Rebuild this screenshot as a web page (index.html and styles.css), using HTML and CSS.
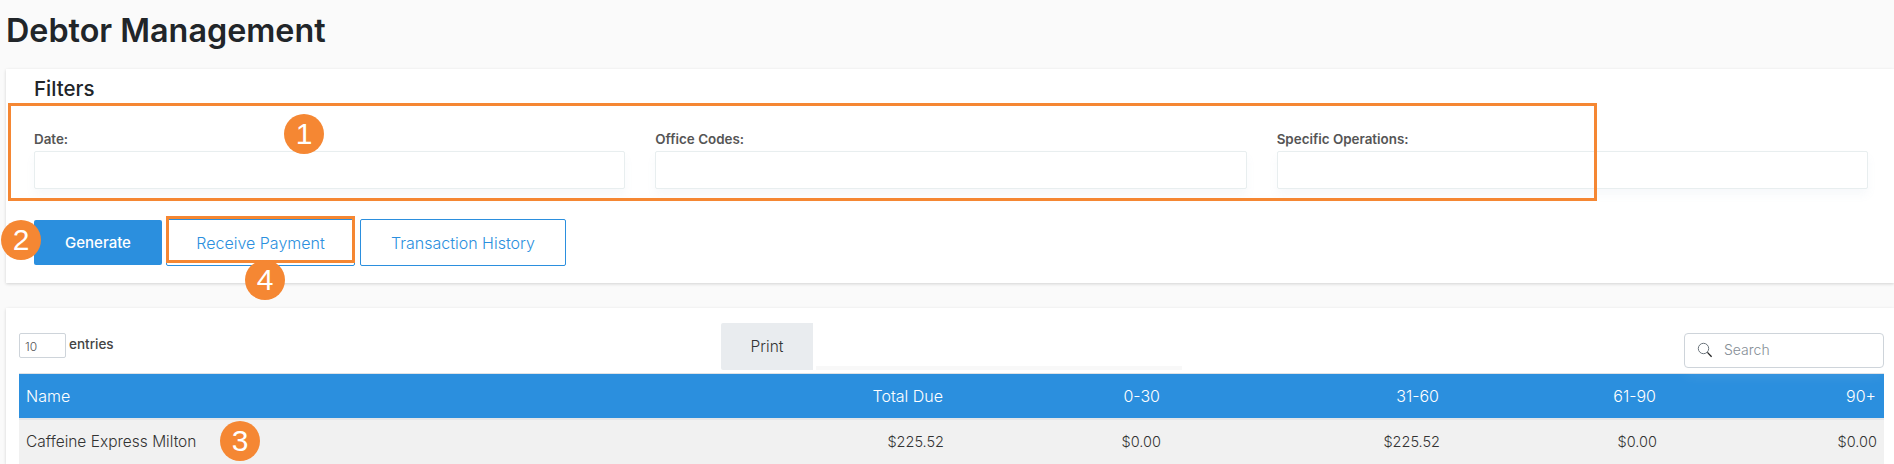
FILE: index.html
```html
<!DOCTYPE html>
<html lang="en">
<head>
    <meta charset="UTF-8">
    <meta name="viewport" content="width=device-width, initial-scale=1.0">
    <title>Debtor Management</title>
    <link rel="stylesheet" href="styles.css">
</head>
<body>
    <div class="page">
        <h1 class="page-title">Debtor Management</h1>

        <section class="card filters-card">
            <h3 class="card-title">Filters</h3>
            <div class="filter-row">
                <div class="filter-field">
                    <label>Date:</label>
                    <input type="text" class="filter-input">
                </div>
                <div class="filter-field">
                    <label>Office Codes:</label>
                    <input type="text" class="filter-input">
                </div>
                <div class="filter-field">
                    <label>Specific Operations:</label>
                    <input type="text" class="filter-input">
                </div>
            </div>
            <div class="button-row">
                <button type="button" class="btn btn-solid">Generate</button>
                <button type="button" class="btn btn-outline btn-receive">Receive Payment</button>
                <button type="button" class="btn btn-outline btn-history">Transaction History</button>
            </div>
        </section>

        <section class="card table-card">
            <div class="table-toolbar">
                <div class="entries">
                    <span class="entries-select">10</span>
                    <span class="entries-label">entries</span>
                </div>
                <div class="print-bar">
                    <button type="button" class="btn-print">Print</button>
                    <div class="print-strip"></div>
                </div>
                <div class="search-box">
                    <svg class="search-icon" width="16" height="16" viewBox="0 0 16 16" fill="none">
                        <circle cx="6.5" cy="6.5" r="5.2" stroke="#6c757d" stroke-width="1"/>
                        <path d="M10.4 10.4L14.6 14.8" stroke="#222" stroke-width="1.3"/>
                    </svg>
                    <input type="text" class="search-input" placeholder="Search">
                </div>
            </div>

            <table class="debtor-table">
                <colgroup>
                    <col class="col-name">
                    <col class="col-total">
                    <col class="col-short">
                    <col class="col-wide">
                    <col class="col-short">
                    <col class="col-last">
                </colgroup>
                <thead>
                    <tr>
                        <th class="text-left">Name</th>
                        <th>Total Due</th>
                        <th>0-30</th>
                        <th>31-60</th>
                        <th>61-90</th>
                        <th>90+</th>
                    </tr>
                </thead>
                <tbody>
                    <tr>
                        <td class="text-left">Caffeine Express Milton</td>
                        <td>$225.52</td>
                        <td>$0.00</td>
                        <td>$225.52</td>
                        <td>$0.00</td>
                        <td>$0.00</td>
                    </tr>
                </tbody>
            </table>
        </section>

        <!-- annotations drawn over the screen -->
        <div class="callout-box callout-filters"></div>
        <div class="callout-box callout-receive"></div>
        <div class="badge badge-1">1</div>
        <div class="badge badge-2">2</div>
        <div class="badge badge-3">3</div>
        <div class="badge badge-4">4</div>
    </div>
</body>
</html>
```

FILE: styles.css
```css
html, body {
    margin: 0;
    height: 100%;
    overflow: hidden;
}

body {
    font-family: 'Inter', 'Noto Sans', sans-serif;
    background: #fafafa;
    color: #333;
}

.page {
    position: relative;
    height: 464px;
    overflow: hidden;
}

.page-title {
    margin: 0;
    height: 69px;
    padding: 13px 0 0 6px;
    box-sizing: border-box;
    font-size: 32.3px;
    line-height: 36px;
    font-weight: 600;
    color: #212529;
}

.card {
    margin-left: 6px;
    background: #fff;
    box-shadow: 0 1px 3px rgba(0, 0, 0, 0.16);
}

/* Filters */
.filters-card {
    height: 214px;
    box-sizing: border-box;
    padding: 8px 26px 0 28px;
}

.card-title {
    margin: 0;
    font-size: 20.5px;
    line-height: 24px;
    font-weight: 500;
    color: #212529;
}

.filter-row {
    display: grid;
    grid-template-columns: repeat(3, 1fr);
    gap: 30px;
    margin-top: 30px;
}

.filter-field label {
    display: block;
    height: 20px;
    font-size: 13.4px;
    line-height: 16px;
    font-weight: 600;
    color: #555;
}

.filter-input {
    display: block;
    width: 100%;
    height: 38px;
    box-sizing: border-box;
    border: 1px solid #e8eeef;
    border-radius: 2px;
    background: #fff;
    box-shadow: 0 6px 10px rgba(120, 160, 180, 0.06);
}

.button-row {
    display: flex;
    align-items: center;
    margin-top: 30px;
    height: 47px;
}

.btn {
    height: 47px;
    box-sizing: border-box;
    border-radius: 2px;
    font-family: inherit;
    font-size: 16px;
    padding: 0;
}

.btn-solid {
    width: 128px;
    height: 45px;
    border: none;
    background: #2b8fde;
    color: #fff;
    font-size: 15px;
    font-weight: 500;
}

.btn-outline {
    background: #fff;
    border: 1px solid #2b8fde;
    color: #2b8fde;
    font-weight: 300;
}

.btn-receive {
    width: 189px;
    margin-left: 4px;
}

.btn-history {
    width: 206px;
    margin-left: 5px;
}

/* Table card */
.table-card {
    margin-top: 25px;
    height: 156px;
    box-sizing: border-box;
    padding: 15px 10px 0 13px;
}

.table-toolbar {
    display: grid;
    grid-template-columns: 702px 461px 1fr;
    height: 50px;
}

.entries {
    display: flex;
    align-items: flex-start;
    margin-top: 10px;
}

.entries-select {
    width: 47px;
    height: 25px;
    box-sizing: border-box;
    border: 1px solid #ced4da;
    border-radius: 2px;
    padding-left: 5px;
    font-size: 12px;
    font-weight: 300;
    line-height: 25px;
    color: #555;
}

.entries-label {
    margin-left: 3px;
    font-size: 13.5px;
    font-weight: 500;
    line-height: 22px;
    color: #444;
}

.print-bar {
    display: flex;
    align-items: flex-end;
    height: 47px;
}

.btn-print {
    width: 92px;
    height: 47px;
    border: none;
    border-radius: 2px 0 0 2px;
    background: #e9ecef;
    font-family: inherit;
    font-size: 15.5px;
    font-weight: 300;
    color: #333;
    padding: 0;
}

.print-strip {
    flex: 1;
    height: 4px;
    margin-left: 3px;
    background: #f8f8f8;
}

.search-box {
    justify-self: end;
    display: flex;
    align-items: center;
    width: 200px;
    height: 35px;
    margin-top: 10px;
    box-sizing: border-box;
    padding: 0 0 2px 12px;
    border: 1px solid #ced4da;
    border-radius: 4px;
    background: #fff;
    box-shadow: 0 8px 14px rgba(255, 255, 255, 0.08);
}

.search-icon {
    flex: none;
}

.search-input {
    width: 150px;
    margin-left: 11px;
    border: none;
    outline: none;
    padding: 0;
    font-family: inherit;
    font-size: 14px;
    font-weight: 300;
}

.search-input::placeholder {
    color: #868e96;
}

.debtor-table {
    width: 1865px;
    table-layout: fixed;
    border-collapse: collapse;
    font-size: 14.5px;
}

.col-name { width: 560px; }
.col-total { width: 372px; }
.col-short { width: 217px; }
.col-wide { width: 279px; }
.col-last { width: 220px; }

.debtor-table th,
.debtor-table td {
    padding: 0 7px;
    text-align: right;
    font-weight: 300;
}

.debtor-table th {
    height: 45px;
    box-sizing: border-box;
    padding-right: 8px;
    border-top: 1px solid #dee2e6;
    border-bottom: 2px solid #e4e6e8;
    background: #2b8fde;
    color: #fff;
    font-size: 16px;
}

.debtor-table td {
    height: 44px;
    background: #f1f1f1;
    color: #333;
}

.debtor-table td.text-left {
    font-size: 15.5px;
}

.debtor-table .text-left {
    padding-left: 7px;
    text-align: left;
}

/* Annotations */
.callout-box {
    position: absolute;
    box-sizing: border-box;
    border: 3px solid #f58733;
}

.callout-filters {
    left: 8px;
    top: 103px;
    width: 1589px;
    height: 98px;
}

.callout-receive {
    left: 166px;
    top: 216px;
    width: 189px;
    height: 47px;
}

.badge {
    position: absolute;
    width: 40px;
    height: 40px;
    border-radius: 50%;
    background: #f58733;
    color: #fff;
    font-family: 'Liberation Sans', sans-serif;
    font-size: 30px;
    line-height: 40px;
    text-align: center;
}

.badge-1 { left: 284px; top: 114px; }
.badge-2 { left: 1px; top: 220px; }
.badge-3 { left: 220px; top: 421px; }
.badge-4 { left: 245px; top: 260px; }
```
